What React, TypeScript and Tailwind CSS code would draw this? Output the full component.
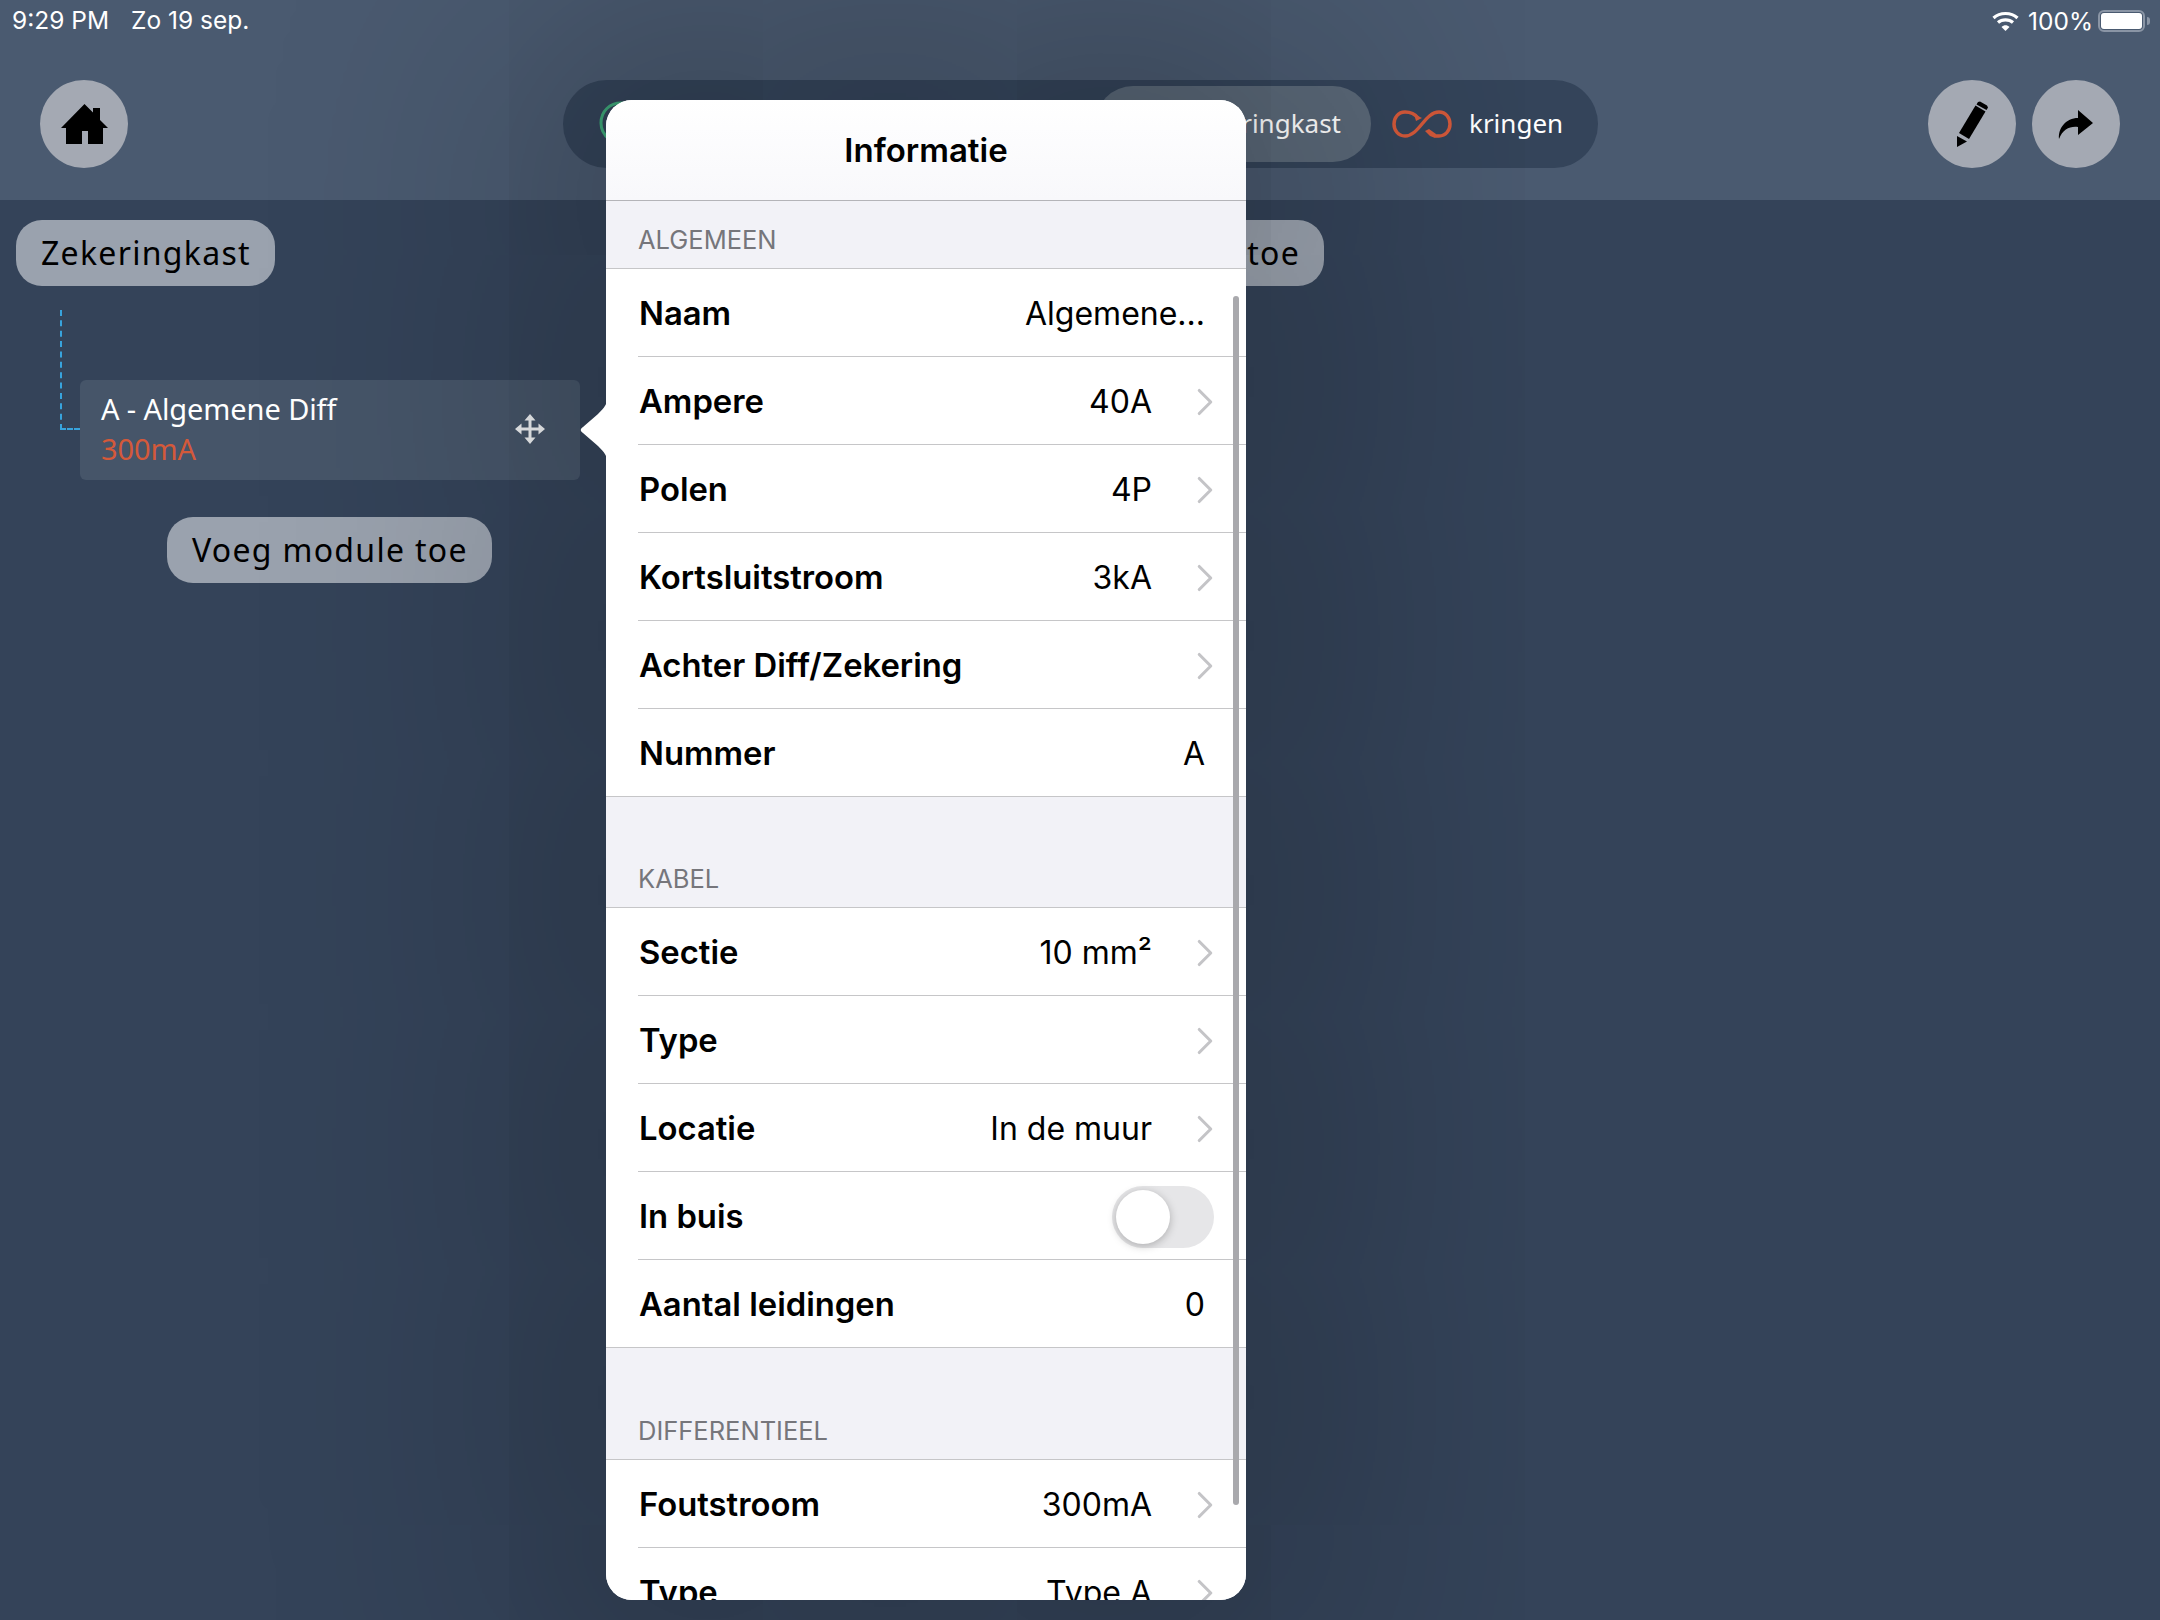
import { ChevronRight } from 'lucide-react';

type Row = {
  readonly label: string;
  readonly value?: string;
  readonly chevron?: boolean;
  readonly toggle?: boolean;
};

const ALGEMEEN: Row[] = [
  { label: 'Naam', value: 'Algemene...' },
  { label: 'Ampere', value: '40A', chevron: true },
  { label: 'Polen', value: '4P', chevron: true },
  { label: 'Kortsluitstroom', value: '3kA', chevron: true },
  { label: 'Achter Diff/Zekering', chevron: true },
  { label: 'Nummer', value: 'A' },
];

const KABEL: Row[] = [
  { label: 'Sectie', value: '10 mm²', chevron: true },
  { label: 'Type', chevron: true },
  { label: 'Locatie', value: 'In de muur', chevron: true },
  { label: 'In buis', toggle: true },
  { label: 'Aantal leidingen', value: '0' },
];

const DIFF: Row[] = [
  { label: 'Foutstroom', value: '300mA', chevron: true },
  { label: 'Type', value: 'Type A', chevron: true },
];

function HomeIcon() {
  return (
    <svg viewBox="0 0 47 40" className="w-[47px] h-10" fill="#000">
      <path d="M23.500 0 L32 8.500 V4 H39 V16 L47 24 H42 V40 H27 V27 H21 V40 H5 V24 H0 Z" />
    </svg>
  );
}

function PencilIcon() {
  return (
    <svg viewBox="14 8 36 50" className="w-9 h-[50px]" fill="#000">
      <path d="M38 11 L40 10.500 L47 14.500 L48 16.500 L46.500 19 L36.500 13.500 Z" />
      <path d="M35.500 14.500 L45.500 20.500 L29 48 L19 42 Z" />
      <path d="M17 45 L27 50.500 L17 56 Z" />
    </svg>
  );
}

function ShareIcon() {
  return (
    <svg viewBox="116 16 40 34" className="w-10 h-[34px]" fill="#000">
      <path d="M138 19 L153 32 L138 44 V36 C130 35 123 38 119 48 C118 37 126 27 138 27 Z" />
    </svg>
  );
}

function MoveIcon() {
  return (
    <svg viewBox="0 0 30 30" className="w-[30px] h-[30px]" fill="#f1f3f5">
      <path d="M15 0 L20.500 6.500 H16.500 V13.500 H23.500 V9.500 L30 15 L23.500 20.500 V16.500 H16.500 V23.500 H20.500 L15 30 L9.500 23.500 H13.500 V16.500 H6.500 V20.500 L0 15 L6.500 9.500 V13.500 H13.500 V6.500 H9.500 Z" />
    </svg>
  );
}

function LoopIcon() {
  return (
    <svg viewBox="0 0 60 28" className="w-[60px] h-7" fill="none" stroke="#d4593a" strokeWidth="3.500">
      <path d="M26 8 C23 4 18 2 13 2 C6 2 2 8 2 14 C2 20 6 26 13 26 C20 26 25 20 30 14 C35 8 40 2 47 2 C54 2 58 8 58 14 C58 20 54 26 47 26 L43 26" />
      <path d="M22 4 L30 8 L24 11 Z" fill="#d4593a" stroke="none" />
      <path d="M37 19 L44 24 L43 28 L38 26 L33 21 L35 20 Z" fill="#d4593a" stroke="none" />
    </svg>
  );
}

function BulbIcon() {
  return (
    <svg viewBox="0 0 44 46" className="w-11 h-[46px]" fill="none" stroke="#3fa87a" strokeWidth="3">
      <path d="M10 46 V38 C5 34 2 28 2 22 C2 10 11 2 22 2 C33 2 42 10 42 22 C42 28 39 34 34 38 V46" />
    </svg>
  );
}

function WifiIcon() {
  return (
    <svg viewBox="0 0 27 20" className="w-[27px] h-5" fill="none" stroke="#fff" strokeWidth="3.200">
      <path d="M1.500 7 C8 1 19 1 25.500 7" />
      <path d="M6 11.500 C10 8 17 8 21 11.500" />
      <path d="M9.500 16 L13.500 20 L17.500 16 C15 13.500 12 13.500 9.500 16 Z" fill="#fff" stroke="none" />
    </svg>
  );
}

function RoundButton({ children }: { children: React.ReactNode }) {
  return (
    <div className="w-[88px] h-[88px] rounded-full bg-[#a4a9b3] flex items-center justify-center">
      {children}
    </div>
  );
}

function Pill({ children }: { children: React.ReactNode }) {
  return (
    <div className="h-[66px] rounded-[26px] bg-[#9aa2ae] pl-[25px] pr-6 flex items-center text-[32px] tracking-[1.3px] text-black font-['Noto_Sans',sans-serif]">
      {children}
    </div>
  );
}

function TableRow({ row, last }: { row: Row; last: boolean }) {
  return (
    <div className={`h-[88px] pl-8 bg-white ${last ? 'border-b border-[#c6c6c8]' : ''}`}>
      <div
        className={`h-full flex items-center pt-[2px] pr-[41px] ${last ? '' : 'border-b border-[#c6c6c8]'}`}
      >
        <span className="ml-px text-[32.800px] font-semibold text-black">{row.label}</span>
        <span className="ml-auto text-[32px] text-black">{row.value}</span>
        {row.chevron && (
          <ChevronRight className="w-[46px] h-[46px] text-[#c4c4c7] ml-[30px] mr-[-23px]" strokeWidth={1.6} />
        )}
        {row.toggle && (
          <div className="mr-[-9px] w-[102px] h-[62px] rounded-full bg-[#e6e6e8] relative">
            <div className="absolute left-[4px] top-[4px] w-[54px] h-[54px] rounded-full bg-white shadow-[0_2px_8px_rgba(0,0,0,0.25)]" />
          </div>
        )}
      </div>
    </div>
  );
}

function Section({ title, rows, heightClass }: { title: string; rows: Row[]; heightClass: string }) {
  return (
    <div>
      <div
        className={`${heightClass} bg-[#f2f2f7] flex items-end pl-8 pb-[9px] text-[25.500px] text-[#76767b] border-b border-[#c6c6c8]`}
      >
        {title}
      </div>
      {rows.map((r, i) => (
        <TableRow key={r.label + i} row={r} last={i === rows.length - 1} />
      ))}
    </div>
  );
}

function Popover() {
  return (
    <div className="absolute left-[606px] top-[100px] w-[640px] h-[1500px] shadow-[0_0_260px_90px_rgba(0,0,0,0.23)] rounded-[26px]">
      <svg viewBox="0 0 28 72" className="absolute left-[-26px] top-[294px] w-7 h-[72px]" fill="#fff">
        <path d="M28 0 C28 10 24 14 18 20 L3 33 C0 35 0 37 3 39 L18 52 C24 58 28 62 28 72 Z" />
      </svg>
      <div className="relative h-full rounded-[26px] overflow-hidden bg-white font-['Inter',sans-serif]">
        <div className="h-[101px] pt-[2px] bg-gradient-to-b from-white to-[#f8f8fb] border-b border-[#b4b4b8] flex items-center justify-center text-[33px] font-semibold text-black">
          Informatie
        </div>
        <Section title="ALGEMEEN" rows={ALGEMEEN} heightClass="h-[68px]" />
        <Section title="KABEL" rows={KABEL} heightClass="h-[111px]" />
        <Section title="DIFFERENTIEEL" rows={DIFF} heightClass="h-[112px]" />
        <div className="absolute right-[7px] top-[196px] w-[6px] h-[1209px] rounded-full bg-[#a9a9ad]" />
      </div>
    </div>
  );
}

export default function App() {
  return (
    <div className="relative w-[2160px] h-[1620px] overflow-hidden bg-[#344359] font-['Noto_Sans',sans-serif]">
      <header className="h-[200px] bg-[#4a5a70] relative px-10 pt-20 flex items-start">
        <div className="absolute left-[12px] top-[2px] text-[24.500px] text-white font-['Inter',sans-serif]">
          <span>9:29 PM</span>
          <span className="ml-[22px]">Zo 19 sep.</span>
        </div>
        <div className="absolute right-[10px] top-[3px] flex items-center text-[24.500px] text-white font-['Inter',sans-serif]">
          <WifiIcon />
          <span className="ml-[9px]">100%</span>
          <div className="ml-[5px] w-[47px] h-[22px] rounded-[6px] border-2 border-[#8a95a5] p-px">
            <div className="h-full bg-white rounded-[3px]" />
          </div>
          <div className="ml-[2px] w-[3px] h-2 bg-[#8a95a5] rounded-r" />
        </div>

        <RoundButton>
          <HomeIcon />
        </RoundButton>

        <div className="ml-[435px] w-[1035px] h-[88px] rounded-full bg-[#34445a] flex items-center px-[6px]">
          <div className="ml-[30px]">
            <BulbIcon />
          </div>
          <div className="ml-[452px] w-[276px] h-[76px] pb-[2px] rounded-full bg-[#5a6878] flex items-center justify-end pr-[30px] text-[26px] text-white">
            Zekeringkast
          </div>
          <div className="ml-[21px]">
            <LoopIcon />
          </div>
          <span className="ml-[17px] pb-[2px] text-[26px] text-white">kringen</span>
        </div>

        <div className="ml-auto flex gap-4">
          <RoundButton>
            <PencilIcon />
          </RoundButton>
          <RoundButton>
            <ShareIcon />
          </RoundButton>
        </div>
      </header>

      <main className="relative pt-5 pl-4">
        <div className="flex justify-between w-[1308px]">
          <Pill>Zekeringkast</Pill>
          <Pill>Voeg kast toe</Pill>
        </div>
        <div className="mt-[24px] ml-[44px] flex items-start">
          <div className="w-5 h-[120px] border-l-2 border-b-2 border-dashed border-[#38a3dc]" />
          <div className="mt-[70px] w-[500px] h-[100px] pb-[2px] rounded-[6px] bg-[#465569] pl-[21px] pr-[35px] flex items-center justify-between">
            <div className="text-[29px] leading-[40px] tracking-[-0.1px]">
              <div className="text-white">A - Algemene Diff</div>
              <div className="text-[#d4593a]">300mA</div>
            </div>
            <MoveIcon />
          </div>
        </div>
        <div className="mt-[37px] ml-[151px] flex">
          <Pill>Voeg module toe</Pill>
        </div>
      </main>

      <Popover />
    </div>
  );
}
